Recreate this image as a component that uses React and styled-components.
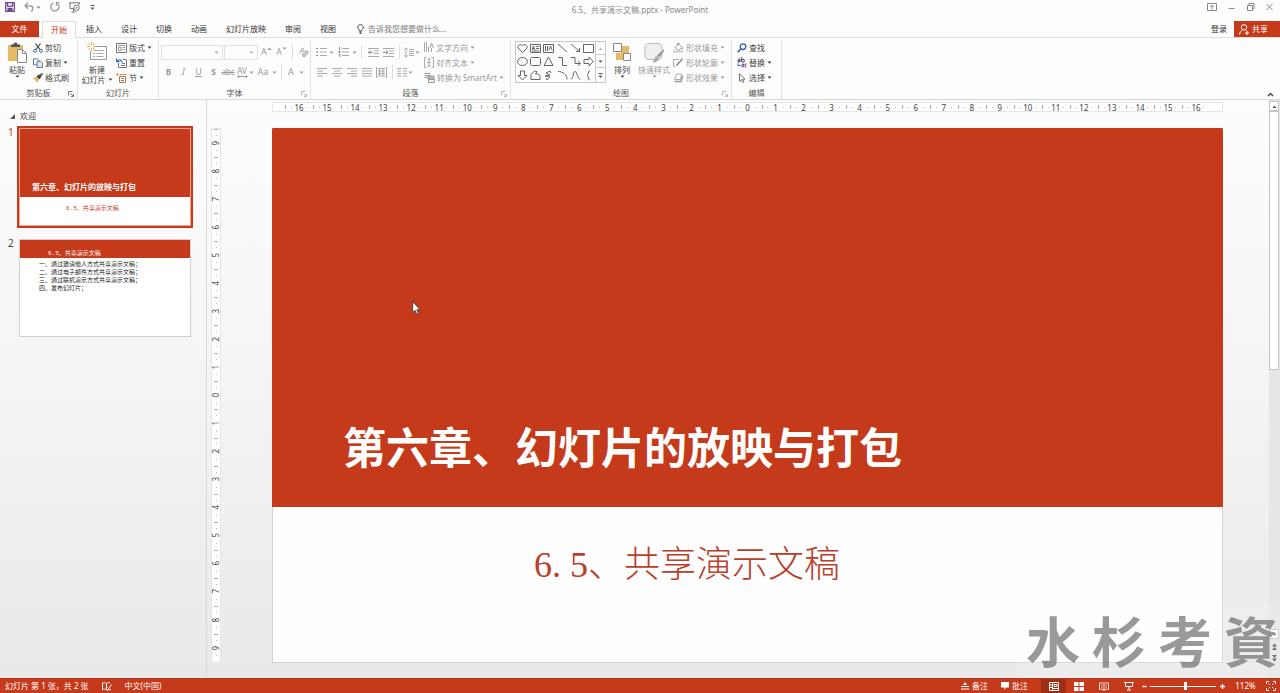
import React from "react";
import styled, { createGlobalStyle, css } from "styled-components";

const RED = "#c53a1a";
const SANS = `"Noto Sans", "Noto Sans CJK SC", sans-serif`;
const CJK = `"Noto Sans CJK SC", sans-serif`;

const GlobalStyle = createGlobalStyle`
  * { box-sizing: border-box; }
  body { margin: 0; background: #fdfdfd; color: #444; font-family: ${SANS}; font-size: 8px; line-height: 12px; }
  button, select, input { font: inherit; color: inherit; margin: 0; }
  h1, h2, p, ul, ol { margin: 0; padding: 0; font-weight: inherit; font-size: inherit; }
  svg { display: block; flex: none; }
`;

const Page = styled.div`
  position: relative;
  display: flex;
  flex-direction: column;
  min-height: 100vh;
  overflow: hidden;
`;

const PlainButton = styled.button`
  display: flex;
  align-items: center;
  gap: ${(p) => p.$gap || 0}px;
  padding: 0;
  border: 0;
  background: none;
  white-space: nowrap;
`;

/* ---------- title bar ---------- */
const TitleBar = styled.header`
  display: grid;
  grid-template-columns: 1fr auto 1fr;
  align-items: center;
  height: 20px;
  color: #8a8a8a;
`;
const QuickAccess = styled.div`
  display: flex;
  align-items: center;
  gap: 9px;
  padding: 0 0 6px 5px;
`;
const WindowTitle = styled.h1`
  font-size: 8px;
  line-height: 12px;
`;
const WindowControls = styled.div`
  display: flex;
  justify-content: flex-end;
  gap: 10px;
  padding: 0 6px 6px 0;
`;

/* ---------- tabs ---------- */
const TabBar = styled.nav`
  display: flex;
  align-items: stretch;
  height: 18px;
  border-bottom: 1px solid #dedede;
`;
const Tab = styled(PlainButton)`
  padding: 0 9px;
  margin-right: 1px;
  color: #333;
`;
const FileTab = styled(Tab)`
  width: 39px;
  justify-content: center;
  margin: 1px 3px 0 0;
  background: ${RED};
  color: #fff;
`;
const ActiveTab = styled(Tab)`
  width: 34px;
  justify-content: center;
  padding: 0;
  margin: 1px 1px -1px 0;
  border: 1px solid #dedede;
  border-bottom: 0;
  background: #fdfdfd;
  color: ${RED};
`;
const TellMe = styled(PlainButton)`
  gap: 4px;
  margin-left: 11px;
  color: #777;
`;
const SignIn = styled(Tab)`
  margin-left: auto;
  padding: 0 7px;
  margin-right: 0;
`;
const ShareButton = styled(PlainButton)`
  width: 46px;
  gap: 3px;
  padding-left: 5px;
  margin-top: 1px;
  background: ${RED};
  color: #fff;
`;

/* ---------- ribbon ---------- */
const Ribbon = styled.section`
  display: flex;
  height: 62px;
  border-bottom: 1px solid #d8d8d8;
`;
const Group = styled.div`
  position: relative;
  display: flex;
  flex-direction: column;
  flex: none;
  width: ${(p) => p.$width}px;
  margin: 2px 0 0;
  border-right: 1px solid #e2e2e2;
`;
const GroupBody = styled.div`
  display: flex;
  flex: 1;
  padding-left: ${(p) => p.$pad || 0}px;
`;
const GroupLabel = styled.div`
  text-align: center;
  line-height: 12px;
  color: #555;
`;
const Launcher = styled(PlainButton)`
  position: absolute;
  right: 3px;
  bottom: 2px;
  color: ${(p) => (p.$dim ? "#bbb" : "#777")};
`;
const BigButton = styled(PlainButton)`
  flex-direction: column;
  width: ${(p) => p.$width}px;
  height: 45px;
  padding-top: 2px;
  line-height: 10px;
  color: ${(p) => (p.$dim ? "#999" : "#444")};
  svg:first-child { margin-bottom: 2px; }
`;
const BigLabel = styled.span`
  display: flex;
  align-items: center;
  gap: 2px;
`;
const Stack = styled.div`
  display: flex;
  flex-direction: column;
  margin-left: ${(p) => p.$left || 0}px;
`;
const SmallButton = styled(PlainButton)`
  height: 15px;
  gap: 2px;
  color: ${(p) => (p.$dim ? "#999" : "#444")};
`;
const ToolRows = styled.div`
  display: flex;
  flex-direction: column;
  gap: 6px;
  padding-top: 5px;
`;
const ToolRow = styled.div`
  display: flex;
  align-items: center;
  height: 14px;
  color: #999;
`;
const Tool = styled(PlainButton)`
  justify-content: center;
  width: ${(p) => p.$width || 15}px;
  height: 14px;
  font-size: ${(p) => (p.$small ? 8 : 9)}px;
  ${(p) => p.$bold && css`font-weight: 700;`}
  ${(p) => p.$italic && css`font-style: italic;`}
  ${(p) => p.$underline && css`text-decoration: underline;`}
`;
const Raised = styled.span`
  display: flex;
  align-self: flex-start;
  padding-top: 2px;
`;
const Divider = styled.span`
  width: 1px;
  height: 14px;
  margin: 0 ${(p) => p.$gap || 3}px;
  background: #ddd;
`;
const Combo = styled.div`
  display: flex;
  align-items: center;
  width: ${(p) => p.$width}px;
  height: 15px;
  padding-right: 3px;
  margin-right: 1px;
  border: 1px solid #e0e0e0;
  color: #aaa;
`;
const ComboSelect = styled.select`
  flex: 1;
  min-width: 0;
  height: 12px;
  padding: 0;
  border: 0;
  appearance: none;
  background: none;
`;
const Gallery = styled.div`
  display: flex;
  width: 91px;
  height: 42px;
  margin-top: 1px;
  border: 1px solid #c8c8c8;
`;
const GalleryGrid = styled.div`
  display: grid;
  flex: 1;
  grid-template-columns: repeat(6, 1fr);
  place-items: center;
`;
const GalleryScroll = styled.div`
  display: grid;
  width: 10px;
  border-left: 1px solid #c8c8c8;
`;
const GalleryArrow = styled(PlainButton)`
  justify-content: center;
  color: ${(p) => (p.$dim ? "#bbb" : "#555")};
  & + & { border-top: 1px solid #c8c8c8; }
`;
const CollapseButton = styled(PlainButton)`
  align-self: flex-end;
  margin: 0 6px 2px auto;
`;

/* ---------- workspace ---------- */
const Workspace = styled.main`
  display: flex;
  flex: 1;
  background: linear-gradient(#fdfdfd, #f4f4f5 50%, #e9e9e9);
`;
const ThumbPane = styled.aside`
  flex: none;
  width: 207px;
  padding-top: 10px;
  border-right: 1px solid #d9d9d9;
`;
const SectionHeader = styled(PlainButton)`
  gap: 5px;
  height: 12px;
  padding-left: 10px;
  margin-bottom: 4px;
`;
const ThumbRow = styled.div`
  display: flex;
  margin-bottom: 9px;
  padding-left: 8px;
`;
const ThumbNumber = styled.span`
  width: 9px;
  font-size: 10px;
  color: ${(p) => (p.$active ? RED : "#444")};
`;
const Thumb = styled.div`
  display: flex;
  flex-direction: column;
  width: 176px;
  height: 102px;
  border: 2px solid ${(p) => (p.$active ? RED : "transparent")};
  background: #fff;
  background-clip: padding-box;
  outline: 1px solid ${(p) => (p.$active ? "#f0a48f" : "#cfcfcf")};
  outline-offset: -3px;
  font-family: ${CJK};
`;
const ThumbTitle = styled.h2`
  height: ${(p) => p.$height}px;
  margin: 1px 1px 0;
  padding: ${(p) => (p.$small ? 7 : 52)}px 0 0 ${(p) => (p.$small ? 28 : 12)}px;
  background: ${RED};
  color: #fff;
  font-size: ${(p) => (p.$small ? 6 : 8)}px;
  font-weight: ${(p) => (p.$small ? 400 : 700)};
  line-height: 12px;
  white-space: nowrap;
`;
const ThumbSubtitle = styled.p`
  padding: 5px 0 0 47px;
  font-size: 6px;
  line-height: 12px;
  color: ${RED};
`;
const ThumbList = styled.ul`
  list-style: none;
  padding: 2px 0 0 20px;
  font-size: 6px;
  line-height: 8px;
  color: #222;
`;
const Mono = styled.span`
  font-family: "Liberation Mono", monospace;
`;
const Editor = styled.section`
  display: grid;
  grid-template-columns: 10px minmax(0, 1fr);
  column-gap: 51px;
  row-gap: 16px;
  flex: 1;
  align-content: start;
  padding: 2px 46px 14px 4px;
`;
const HRuler = styled.div`
  grid-column: 2;
  display: flex;
  height: 10px;
  padding: 0 12px;
  border: 1px solid #e6e6e6;
  background: #fff;
`;
const HMark = styled.span`
  flex: 1 1 0;
  display: flex;
  justify-content: center;
  font-size: 8px;
  line-height: 9px;
  background:
    linear-gradient(#aaa, #aaa) 0 50% / 1px 4px no-repeat,
    linear-gradient(#bbb, #bbb) 22% 50% / 1px 1px no-repeat,
    linear-gradient(#bbb, #bbb) 78% 50% / 1px 1px no-repeat;
`;
const VRuler = styled.div`
  display: flex;
  flex-direction: column;
  border: 1px solid #e6e6e6;
  background: #fff;
`;
const VMark = styled.span`
  flex: 1 1 0;
  display: flex;
  align-items: center;
  justify-content: center;
  font-size: 8px;
  line-height: 8px;
  background:
    linear-gradient(#aaa, #aaa) 50% 0 / 4px 1px no-repeat,
    linear-gradient(#bbb, #bbb) 50% 22% / 1px 1px no-repeat,
    linear-gradient(#bbb, #bbb) 50% 78% / 1px 1px no-repeat;
`;
const Turned = styled.span`
  writing-mode: vertical-rl;
  transform: rotate(180deg);
`;
const Slide = styled.article`
  position: relative;
  display: flex;
  flex-direction: column;
  aspect-ratio: 16 / 9;
  border: 1px solid #d4d4d4;
  border-top-color: ${RED};
  background: #fefefe;
  font-family: ${CJK};
`;
const SlideTitle = styled.h2`
  display: flex;
  align-items: flex-end;
  height: 71%;
  padding: 0 0 32px 71px;
  margin: 0 -1px;
  background: ${RED};
  color: #fff;
  font-size: 43px;
  font-weight: 700;
  line-height: 60px;
  white-space: nowrap;
`;
const SlideSubtitle = styled.p`
  padding: 29px 0 0 261px;
  color: #b8402a;
  font-size: 36px;
  font-weight: 300;
  line-height: 50px;
  white-space: nowrap;
`;
const Digits = styled.span`
  font-family: "Liberation Serif", serif;
  font-weight: 400;
`;
const WideDot = styled.span`
  display: inline-block;
  width: 18px;
`;
const Pointer = styled.svg`
  position: absolute;
  left: 139px;
  top: 172px;
`;
const ScrollBar = styled.div`
  display: flex;
  flex-direction: column;
  flex: none;
  width: 11px;
  padding: 1px 1px 15px 0;
  background: #e6e6e6;
`;
const ScrollButton = styled(PlainButton)`
  justify-content: center;
  height: 10px;
  border: 1px solid ${(p) => (p.$bare ? "transparent" : "#c4c4c4")};
  background: ${(p) => (p.$bare ? "none" : "#fff")};
  margin-top: ${(p) => (p.$bare ? 2 : 0)}px;
  color: #555;
`;
const ScrollTrack = styled.div`
  flex: 1;
`;
const ScrollThumb = styled.div`
  height: 50%;
  border: 1px solid #c4c4c4;
  background: #fff;
`;

/* ---------- watermark ---------- */
const Watermark = styled.div`
  position: absolute;
  right: 0;
  bottom: 15px;
  display: flex;
  gap: 12px;
  width: 263px;
  height: 76px;
  padding-left: 9px;
  background: rgba(255, 255, 255, 0.15);
  color: rgba(110, 110, 110, 0.7);
  font-family: ${CJK};
  font-size: 54px;
  font-weight: 700;
  line-height: 76px;
  pointer-events: none;
`;

/* ---------- status bar ---------- */
const StatusBar = styled.footer`
  display: flex;
  align-items: center;
  height: 15px;
  padding: 0 4px 0 5px;
  border-top: 1px solid #ad3a20;
  background: ${RED};
  color: #fff;
`;
const StatusButton = styled(PlainButton)`
  gap: 3px;
  margin-right: 13px;
`;
const StatusRight = styled.div`
  display: flex;
  align-items: center;
  align-self: stretch;
  margin-left: auto;
`;
const ViewButton = styled(PlainButton)`
  align-self: stretch;
  justify-content: center;
  width: 25px;
  background: ${(p) => (p.$active ? "#9f2e15" : "none")};
`;
const Zoom = styled.input`
  appearance: none;
  width: 66px;
  height: 10px;
  margin: 0 3px 0 2px;
  background: linear-gradient(#fff, #fff) 0 50% / 100% 1px no-repeat;
  &::-webkit-slider-thumb {
    appearance: none;
    width: 3px;
    height: 8px;
    background: #fff;
  }
`;
const ZoomValue = styled(PlainButton)`
  justify-content: center;
  width: 33px;
  margin: 0 4px 0 3px;
`;

/* ---------- icons ---------- */
const Icon = ({ w = 10, h = w, children, sw = 1, ...rest }) => (
  <svg width={w} height={h} viewBox={`0 0 ${w} ${h}`} fill="none" stroke="currentColor" strokeWidth={sw} aria-hidden="true" {...rest}>
    {children}
  </svg>
);
const Caret = () => (
  <Icon w={5} h={3}><path d="M.5.5h4L2.500 2.700z" fill="currentColor" stroke="none" /></Icon>
);
const CaretUp = () => (
  <Icon w={5} h={3}><path d="M.5 3h4L2.500.5z" fill="currentColor" stroke="none" /></Icon>
);
const LauncherIcon = () => (
  <Icon w={6}><path d="M.5 4.500v-4h4M2.500 2.500l2.500 2.500M5.500 3v2.500H3" /></Icon>
);
const SaveIcon = () => (
  <Icon w={10} stroke="#6f4a92" sw={1.3}><path d="M.7.7h8.600v8.600H.7z" /><path d="M2.500.7v3.500h5V.7" /><path d="M3 9V6.300h4v2.700" fill="#6f4a92" /></Icon>
);
const UndoIcon = () => (
  <Icon w={10} stroke="#999" sw={1.3}><path d="M4 .8L1 3.800l3 3M1 3.800h5.500c3 0 3 4.500.5 5.500" /></Icon>
);
const RedoIcon = () => (
  <Icon w={10} stroke="#999" sw={1.3}><path d="M3.500 1a4.100 4.100 0 1 0 4.500 1.200M9.300.7H6.500v3" /></Icon>
);
const ShowIcon = () => (
  <Icon w={12} h={11} stroke="#777"><path d="M0 .8h11M1 .8v5.700h3.500M10 .8v2.500M4.500 6.500v3M2.500 10h4" /><circle cx="7.500" cy="5.800" r="2.800" /><path d="M6.800 4.500v2.600l2-1.300z" fill="#777" stroke="none" /></Icon>
);
const PasteIcon = () => (
  <Icon w={20} h={21}>
    <path d="M1 3h15v16H1z" fill="#e6b964" stroke="none" />
    <path d="M4 5V2.500h2.500a2 2 0 0 1 4 0H13V5z" fill="#555" stroke="none" />
    <path d="M10.500 7.500h5l4 4v9h-9z" fill="#fff" stroke="#888" /><path d="M15.500 7.500v4h4" stroke="#888" />
  </Icon>
);
const CutIcon = () => (
  <Icon w={10} stroke="#444"><path d="M2.500.5l4.500 6M7.500.5L3 6.500" strokeWidth="1.200" /><circle cx="2" cy="7.800" r="1.500" stroke="#2f6fb5" /><circle cx="8" cy="7.800" r="1.500" stroke="#2f6fb5" /></Icon>
);
const CopyIcon = () => (
  <Icon w={10} stroke="#64789b"><path d="M.5.800h4l1.500 1.500v4.500H.5z" fill="#fff" /><path d="M4 3.300h3.500L9.500 5v4.500H4z" fill="#dfe7f3" /></Icon>
);
const BrushIcon = () => (
  <Icon w={10}><path d="M0 5l4-1.500 2.500 2.500L4 9.500z" fill="#e6b964" stroke="none" /><path d="M3.500 3.500L6 1.300l2.500 2.500L6.500 6.300z" fill="#444" stroke="none" /><path d="M7 2.800L9.500.5" stroke="#444" strokeWidth="1.600" /></Icon>
);
const NewSlideIcon = () => (
  <Icon w={20} h={21}>
    <path d="M3.500 4.500h16v13h-16z" fill="#fff" stroke="#999" />
    <path d="M6 8.500h11M6 11.500h2M9.500 11.500h7M6 14.500h2M9.500 14.500h7" stroke="#aaa" />
    <circle cx="4.500" cy="4.500" r="4.500" fill="#fdfdfd" stroke="none" />
    <path d="M4.500 0v9M0 4.500h9M1.300 1.300l6.400 6.400M7.700 1.300L1.300 7.700" stroke="#e0ac52" /><circle cx="4.500" cy="4.500" r="1.700" fill="#fff" stroke="none" />
  </Icon>
);
const LayoutIcon = () => (
  <Icon w={11} h={10} stroke="#777"><path d="M.5.5h10v9H.5z" /><path d="M2 2.500h7M2.500 4.500H5v3H2.500zM6.500 4.500H9M6.500 6.500H9" stroke="#999" /></Icon>
);
const ResetIcon = () => (
  <Icon w={11} h={10} stroke="#777"><path d="M2.500 5v4.500h8v-8H7M5 7.500h4M6 5.500h3" /><path d="M6 4.500C6 1.300 2.500.800 1 3.500M.6.500v3.200h3" stroke="#2f6fb5" strokeWidth="1.200" /></Icon>
);
const SectionIcon = () => (
  <Icon w={11} h={10} stroke="#d99a52"><path d="M3.500 1.500h7M0 1.500h2.500M1.500 0v3" /><path d="M3.500 3.500h6v6h-6zM5 5.500h3M5 7.500h3" stroke="#a57958" /></Icon>
);
const BulbIcon = () => (
  <Icon w={7} h={10} stroke="#444"><path d="M2.300 7V5.800C-.8 3.500 1 .6 3.500.600S7.800 3.500 4.700 5.800V7zM2.300 8.200h2.400M2.700 9.500h1.600" /></Icon>
);
const PersonIcon = () => (
  <Icon w={10} h={11} stroke="#fff"><circle cx="5" cy="3.300" r="2.700" /><path d="M.7 10.500C.7 8 2 6.500 3.500 6M6.500 6l1 .7M8 7v4M6 9h4" /></Icon>
);
const BulletsIcon = ({ numbered }) => (
  <Icon w={11} h={10} stroke="#aaa"><path d="M4 1.500h7M4 5h7M4 8.500h7" /><path d={numbered ? "M1.500 0v3M.5 4.500h1.500v1H.5M.5 7.500h1.500V10" : "M0 1.500h2M0 5h2M0 8.500h2"} stroke="#888" /></Icon>
);
const IndentIcon = ({ right }) => (
  <Icon w={11} h={9} stroke="#aaa"><path d="M0 .5h11M6 3h5M6 5.500h5M0 8.500h11" /><path d={right ? "M0 4.300h4.500M3 2.500l2 1.800-2 1.800" : "M5 4.300H.7M2.500 2.500l-2 1.800 2 1.800"} stroke="#888" /></Icon>
);
const SpacingIcon = () => (
  <Icon w={10} h={11} stroke="#aaa"><path d="M2 1v9M.3 2.700L2 .800l1.700 1.900M.3 8.300L2 10.200l1.700-1.900M5 2.500h5M5 4.500h5M5 6.500h5M5 8.500h5" /></Icon>
);
const aligns = {
  left: "M0 .5h10M0 3h6M0 5.500h10M0 8h6",
  center: "M0 .5h10M2 3h6M0 5.500h10M2 8h6",
  right: "M0 .5h10M4 3h6M0 5.500h10M4 8h6",
  justify: "M0 .5h10M0 3h10M0 5.500h10M0 8h10",
  columns: "M0 .5h4M0 3h4M0 5.500h4M0 8h4M6 .5h4M6 3h4M6 5.500h4M6 8h4",
};
const AlignIcon = ({ kind }) => <Icon w={10} h={9} stroke="#aaa"><path d={aligns[kind]} /></Icon>;
const DistributeIcon = () => (
  <Icon w={11} h={11} stroke="#aaa"><path d="M.5 0v11M10.500 0v11M2 1.500h7M2 4h7M2 6.500h7M2 9h7M3.500 1v8M7 1v8" /></Icon>
);
const SpacingLettersIcon = () => (
  <Icon w={11} h={3} stroke="#999"><path d="M.7 1.500h9.600M2.300 0L.7 1.500l1.600 1.500M8.700 0l1.600 1.500L8.700 3" /></Icon>
);
const LetterStack = styled.span`
  display: flex;
  flex-direction: column;
  align-items: center;
  line-height: 8px;
`;
const TextDirIcon = () => (
  <Icon w={10} h={11} stroke="#aaa"><path d="M.5 0v10M2.500 0v10M4.500 5v5M5.500 6L7.500.800 9.500 6M6 4h3M7.500 6v4" /></Icon>
);
const AlignTextIcon = () => (
  <Icon w={10} h={11} stroke="#aaa"><path d="M2.500.5h-2v10h2M7.500.5h2v10h-2M5 1.500v8M3.500 3L5 1.300 6.500 3M3.500 8L5 9.700 6.500 8M3 5.500h4" /></Icon>
);
const SmartArtIcon = () => (
  <Icon w={11} h={11} stroke="#999"><path d="M.5 1.500h6M.5 3.500h6M.5 5.500h3" /><path d="M4 4h6v3H4z" fill="#bbb" /><path d="M4.500 7.500h6v3h-6z" fill="#eee" /></Icon>
);
const EraserIcon = () => (
  <Icon w={10} h={10} stroke="#aaa"><path d="M.5 6.500L3.500.8 5 4M2 4.500h2.500" /><path d="M3 7.500l4.500-4L9.500 5 6 9.500H4z" fill="#ccc" /></Icon>
);
const ArrangeIcon = () => (
  <Icon w={20} h={21}>
    <path d="M9 4h8v8H9zM4 11h8v7H4z" fill="#e6b964" stroke="none" />
    <path d="M1.500 1.500h8v8h-8zM11.500 11.500h7v7h-7z" fill="#fff" stroke="#888" />
  </Icon>
);
const StylesIcon = () => (
  <Icon w={20} h={21}>
    <path d="M5 1.500h9c2.500 0 4 1.500 4 4v8c0 2.500-1.500 4-4 4H5c-2.500 0-4-1.500-4-4v-8c0-2.500 1.500-4 4-4z" fill="#efeef2" stroke="#bbb" />
    <path d="M19.800 7L13 13.500l2.200 2.200 4.600-6.200z" fill="#999" stroke="none" /><path d="M12.500 14l2.500 2.500c-1 3-3.500 4-7 4 2-1 2.500-5.500 4.500-6.500z" fill="#aaa" stroke="none" />
  </Icon>
);
const FillIcon = () => (
  <Icon w={11} h={10} stroke="#999"><path d="M2 4.500L5.500 1 9 4.500 5.500 7.500zM4.500 2V.500h2" /><path d="M9.500 4.500v2" /><path d="M0 8.500h10" stroke="#ccc" strokeWidth="2" /></Icon>
);
const OutlineIcon = () => (
  <Icon w={11} h={10} stroke="#aaa"><path d="M6 1.500H.5v7h2" /><path d="M3.500 7.500L9.500.800" stroke="#888" strokeWidth="1.500" /></Icon>
);
const EffectsIcon = () => (
  <Icon w={11} h={10} stroke="#aaa"><path d="M3.500 1h5l-.8 5.500h-6z" fill="#fff" /><path d="M1.500 8.500h6.500l1.700-6" stroke="#999" strokeWidth="1.500" /></Icon>
);
const FindIcon = () => (
  <Icon w={10} stroke="#2f5fa5" sw={1.3}><circle cx="6" cy="3.700" r="2.800" /><path d="M4 5.700L.7 9.200" strokeWidth="1.600" /></Icon>
);
const ReplaceIcon = () => (
  <Icon w={10} h={11} stroke="#4a4a6a"><path d="M1 2h2v3H1V3.500h2M4.700 0v5h2.500V2.500H4.700" /><path d="M6.500 7H5v2.800h1.500V7M9.700 7H8v2.800h1.700" stroke="#7a4a9a" /><path d="M1 6.500v2h2.500" stroke="#2f5fa5" /></Icon>
);
const SelectIcon = () => (
  <Icon w={10} h={10} stroke="#777"><path d="M2.500.8v7.500l2-1.800 1.200 3 1.200-.6-1.200-2.700h2.400z" fill="#fff" /></Icon>
);
const shapePaths = [
  "M5.500 9.500L1 5C0 2.500 3.500 0 5.500 2.800 7.500 0 11 2.500 10 5z",
  "M.5 1.500h10v8H.5zM2 7l1.500-4L5 7M2.500 5.500h2M6 3.500h3M6 5.500h3M2 8h7",
  "M.5 1.500h10v8H.5zM2.500 3v5M4.500 3v5M6 7l1.500-4L9 7",
  "M1 1l9 8",
  "M1 1l8.500 7.500M9.500 5v3.500H6",
  "M.5 1.500h10v8H.5z",
  "M5.500 1.500c6.500 0 6.500 8 0 8s-6.500-8 0-8z",
  "M1.500 1.500h8l1 1v6l-1 1h-8l-1-1v-6z",
  "M5.500 1L10 9.500H1z",
  "M1 1.500h4.500v8H10",
  "M1 1.500h4v6h5M8 5l2.300 2.500L8 10",
  "M1 3.500h5V1l4.500 4.500L6 10V7.500H1z",
  "M3.500 1h4v4.500H10L5.500 10 1 5.500h2.500z",
  "M1 9.500v-5L4.500 1l2.500.5L5.500 4c2.500-.8 4.500.5 4.500 2.500v3z",
  "M7 1L3 3l4 2-5 1 5 1-3 3M7 1l1 2M4 10l-1-2",
  "M1 1.500c5 0 9 3 9 8",
  "M.5 9C4 9 2.500 1.500 5 1.500S7 9.500 10.500 9",
  "M7 1C4.500 1 6 5 4 5.500 6 6 4.500 10 7 10",
];

const ruler = (n) => Array.from({ length: n * 2 + 1 }, (_, i) => Math.abs(i - n));

const Small = ({ icon, label, caret, dim }) => (
  <SmallButton $dim={dim}>{icon}<span>{label}</span>{caret && <Caret />}</SmallButton>
);

export default function App() {
  return (
    <Page>
      <GlobalStyle />
      <TitleBar>
        <QuickAccess>
          <PlainButton aria-label="保存"><SaveIcon /></PlainButton>
          <PlainButton $gap={2} aria-label="撤消"><UndoIcon /><Caret /></PlainButton>
          <PlainButton aria-label="重复"><RedoIcon /></PlainButton>
          <PlainButton aria-label="从头开始"><ShowIcon /></PlainButton>
          <PlainButton aria-label="自定义快速访问工具栏"><Icon w={5} h={5}><path d="M.5.5h4" stroke="#555" /><path d="M.5 2.500h4L2.500 5z" fill="#555" stroke="none" /></Icon></PlainButton>
        </QuickAccess>
        <WindowTitle>6.5、共享演示文稿.pptx - PowerPoint</WindowTitle>
        <WindowControls>
          <PlainButton aria-label="功能区显示选项"><Icon w={10} h={8}><path d="M.5.5h9v7h-9zM5 6.500v-4M3.300 4L5 2.300 6.700 4" /></Icon></PlainButton>
          <PlainButton aria-label="最小化"><Icon w={9} h={8}><path d="M1.500 5.500h6" /></Icon></PlainButton>
          <PlainButton aria-label="还原"><Icon w={9} h={8}><path d="M1.500 2.500h5v5h-5zM3 2.500v-2h5v5H6.500" /></Icon></PlainButton>
          <PlainButton aria-label="关闭"><Icon w={9} h={8}><path d="M1.500 1l6 6M7.500 1l-6 6" /></Icon></PlainButton>
        </WindowControls>
      </TitleBar>

      <TabBar>
        <FileTab>文件</FileTab>
        <ActiveTab>开始</ActiveTab>
        {["插入", "设计", "切换", "动画", "幻灯片放映", "审阅", "视图"].map((t) => <Tab key={t}>{t}</Tab>)}
        <TellMe><BulbIcon />告诉我您想要做什么...</TellMe>
        <SignIn>登录</SignIn>
        <ShareButton><PersonIcon />共享</ShareButton>
      </TabBar>

      <Ribbon>
        <Group $width={78}>
          <GroupBody $pad={4}>
            <BigButton $width={26}><PasteIcon /><BigLabel>粘贴</BigLabel><Caret /></BigButton>
            <Stack $left={3}>
              <Small icon={<CutIcon />} label="剪切" />
              <Small icon={<CopyIcon />} label="复制" caret />
              <Small icon={<BrushIcon />} label="格式刷" />
            </Stack>
          </GroupBody>
          <GroupLabel>剪贴板</GroupLabel>
          <Launcher aria-label="剪贴板选项"><LauncherIcon /></Launcher>
        </Group>

        <Group $width={81}>
          <GroupBody $pad={3}>
            <BigButton $width={32}><NewSlideIcon /><BigLabel>新建</BigLabel><BigLabel>幻灯片<Caret /></BigLabel></BigButton>
            <Stack $left={3}>
              <Small icon={<LayoutIcon />} label="版式" caret />
              <Small icon={<ResetIcon />} label="重置" />
              <Small icon={<SectionIcon />} label="节" caret />
            </Stack>
          </GroupBody>
          <GroupLabel>幻灯片</GroupLabel>
        </Group>

        <Group $width={152}>
          <GroupBody $pad={2}>
            <ToolRows>
              <ToolRow>
                <Combo $width={62}><ComboSelect aria-label="字体"><option></option></ComboSelect><Caret /></Combo>
                <Combo $width={34}><ComboSelect aria-label="字号"><option></option></ComboSelect><Caret /></Combo>
                <Tool aria-label="增大字号">A<Raised><CaretUp /></Raised></Tool>
                <Tool aria-label="减小字号" $small>A<Raised><Caret /></Raised></Tool>
                <Divider />
                <Tool aria-label="清除格式"><EraserIcon /></Tool>
              </ToolRow>
              <ToolRow>
                <Tool $bold $small>B</Tool>
                <Tool $italic>I</Tool>
                <Tool $underline>U</Tool>
                <Tool $bold>S</Tool>
                <Tool $small $width={14} aria-label="删除线"><s>abc</s></Tool>
                <Tool $small $width={14} aria-label="字符间距"><LetterStack>AV<SpacingLettersIcon /></LetterStack></Tool>
                <Caret />
                <Tool $width={18}>Aa</Tool>
                <Caret />
                <Divider $gap={4} />
                <Tool $width={10}>A</Tool>
                <Tool $width={10} aria-label="字体颜色"><Caret /></Tool>
              </ToolRow>
            </ToolRows>
          </GroupBody>
          <GroupLabel>字体</GroupLabel>
          <Launcher $dim aria-label="字体选项"><LauncherIcon /></Launcher>
        </Group>

        <Group $width={200}>
          <GroupBody $pad={3}>
            <ToolRows>
              <ToolRow>
                <Tool aria-label="项目符号"><BulletsIcon /></Tool><Caret />
                <Tool $width={18} aria-label="编号"><BulletsIcon numbered /></Tool><Caret />
                <Divider $gap={4} />
                <Tool aria-label="减少缩进"><IndentIcon /></Tool>
                <Tool aria-label="增加缩进"><IndentIcon right /></Tool>
                <Divider />
                <Tool $width={12} aria-label="行距"><SpacingIcon /></Tool><Caret />
              </ToolRow>
              <ToolRow>
                <Tool aria-label="左对齐"><AlignIcon kind="left" /></Tool>
                <Tool aria-label="居中"><AlignIcon kind="center" /></Tool>
                <Tool aria-label="右对齐"><AlignIcon kind="right" /></Tool>
                <Tool aria-label="两端对齐"><AlignIcon kind="justify" /></Tool>
                <Tool aria-label="分散对齐"><DistributeIcon /></Tool>
                <Divider />
                <Tool $width={12} aria-label="分栏"><AlignIcon kind="columns" /></Tool><Caret />
              </ToolRow>
            </ToolRows>
            <Stack $left={4}>
              <Small dim icon={<TextDirIcon />} label="文字方向" caret />
              <Small dim icon={<AlignTextIcon />} label="对齐文本" caret />
              <Small dim icon={<SmartArtIcon />} label="转换为 SmartArt" caret />
            </Stack>
          </GroupBody>
          <GroupLabel>段落</GroupLabel>
          <Launcher $dim aria-label="段落选项"><LauncherIcon /></Launcher>
        </Group>

        <Group $width={221}>
          <GroupBody $pad={4}>
            <Gallery>
              <GalleryGrid>
                {shapePaths.map((d) => <Icon key={d} w={11} stroke="#666"><path d={d} /></Icon>)}
              </GalleryGrid>
              <GalleryScroll>
                <GalleryArrow $dim aria-label="上一行"><CaretUp /></GalleryArrow>
                <GalleryArrow aria-label="下一行"><Caret /></GalleryArrow>
                <GalleryArrow aria-label="其他"><Icon w={5} h={5}><path d="M.5.5h4" /><path d="M.5 2.500h4L2.500 5z" fill="#555" stroke="none" /></Icon></GalleryArrow>
              </GalleryScroll>
            </Gallery>
            <BigButton $width={32}><ArrangeIcon /><BigLabel>排列</BigLabel><Caret /></BigButton>
            <BigButton $width={32} $dim><StylesIcon /><BigLabel>快速样式</BigLabel><Caret /></BigButton>
            <Stack $left={3}>
              <Small dim icon={<FillIcon />} label="形状填充" caret />
              <Small dim icon={<OutlineIcon />} label="形状轮廓" caret />
              <Small dim icon={<EffectsIcon />} label="形状效果" caret />
            </Stack>
          </GroupBody>
          <GroupLabel>绘图</GroupLabel>
          <Launcher $dim aria-label="形状格式"><LauncherIcon /></Launcher>
        </Group>

        <Group $width={50}>
          <GroupBody $pad={5}>
            <Stack>
              <Small icon={<FindIcon />} label="查找" />
              <Small icon={<ReplaceIcon />} label="替换" caret />
              <Small icon={<SelectIcon />} label="选择" caret />
            </Stack>
          </GroupBody>
          <GroupLabel>编辑</GroupLabel>
        </Group>
        <CollapseButton aria-label="折叠功能区"><Icon w={7} h={5} sw={1.4}><path d="M1 4l2.500-2.500L6 4" /></Icon></CollapseButton>
      </Ribbon>

      <Workspace>
        <ThumbPane>
          <SectionHeader><Icon w={5} h={5}><path d="M5 0v5H0z" fill="#555" stroke="none" /></Icon>欢迎</SectionHeader>
          <ThumbRow>
            <ThumbNumber $active>1</ThumbNumber>
            <Thumb $active>
              <ThumbTitle $height={68}>第六章、幻灯片的放映与打包</ThumbTitle>
              <ThumbSubtitle><Mono>6.5</Mono>、共享演示文稿</ThumbSubtitle>
            </Thumb>
          </ThumbRow>
          <ThumbRow>
            <ThumbNumber>2</ThumbNumber>
            <Thumb>
              <ThumbTitle $height={18} $small><Mono>6.5</Mono>、共享演示文稿</ThumbTitle>
              <ThumbList>
                <li>一、通过邀请他人方式共享演示文稿；</li>
                <li>二、通过电子邮件方式共享演示文稿；</li>
                <li>三、通过联机演示方式共享演示文稿；</li>
                <li>四、发布幻灯片；</li>
              </ThumbList>
            </Thumb>
          </ThumbRow>
        </ThumbPane>

        <Editor>
          <HRuler>{ruler(16).map((n, i) => <HMark key={i}>{n}</HMark>)}</HRuler>
          <VRuler>{ruler(9).map((n, i) => <VMark key={i}><Turned>{n}</Turned></VMark>)}</VRuler>
          <Slide>
            <SlideTitle>第六章、幻灯片的放映与打包</SlideTitle>
            <SlideSubtitle><Digits>6<WideDot>.</WideDot>5</Digits>、共享演示文稿</SlideSubtitle>
            <Pointer width="9" height="14" viewBox="0 0 9 14" aria-hidden="true">
              <path d="M.7.8v10.700l2.400-2.200 1.700 4 1.700-.8-1.700-3.800h3.400z" fill="#fff" stroke="#333" strokeWidth=".8" />
            </Pointer>
          </Slide>
        </Editor>

        <ScrollBar>
          <ScrollButton aria-label="向上滚动"><CaretUp /></ScrollButton>
          <ScrollTrack><ScrollThumb /></ScrollTrack>
          <ScrollButton aria-label="向下滚动"><Caret /></ScrollButton>
          <ScrollButton $bare aria-label="上一张幻灯片"><Icon w={5} h={7}><path d="M0 3.500L2.500.5 5 3.500zM0 7l2.500-3L5 7z" fill="currentColor" stroke="none" /></Icon></ScrollButton>
          <ScrollButton $bare aria-label="下一张幻灯片"><Icon w={5} h={7}><path d="M0 0l2.500 3L5 0zM0 3.500l2.500 3 2.500-3z" fill="currentColor" stroke="none" /></Icon></ScrollButton>
        </ScrollBar>
      </Workspace>

      <StatusBar>
        <StatusButton>幻灯片 第 1 张，共 2 张</StatusButton>
        <StatusButton aria-label="拼写检查"><Icon w={10} h={9}><path d="M4.500 1.500c-1-1-3-1-4-.5v6.500c1-.5 3-.5 4 .5zM4.500 1.500c1-1 2.500-1 3.500-.7M5 8.500c1-.8 2.500-1 4-.8M5.500 5.500l1.200 1.200L9.500 2.500" /></Icon></StatusButton>
        <StatusButton>中文(中国)</StatusButton>
        <StatusRight>
          <StatusButton><Icon w={8} h={8}><path d="M4 0L2 3h4z" fill="#fff" stroke="none" /><path d="M0 4.500h8M0 7h8" /></Icon>备注</StatusButton>
          <StatusButton><Icon w={8} h={8}><path d="M0 0h8v5.500H5L3.500 8V5.500H0z" fill="#fff" stroke="none" /></Icon>批注</StatusButton>
          <ViewButton $active aria-label="普通视图"><Icon w={10} h={9}><path d="M.5.5h9v8h-9zM3.500.5v8M5 2.500h3v2H5zM3.500 6.500h6M.5 3h3M.5 5.500h3" /></Icon></ViewButton>
          <ViewButton aria-label="幻灯片浏览"><Icon w={10} h={9}><path d="M0 0h4.500v4H0zM5.500 0H10v4H5.500zM0 5h4.500v4H0zM5.500 5H10v4H5.500z" fill="#fff" stroke="none" /></Icon></ViewButton>
          <ViewButton aria-label="阅读视图"><Icon w={10} h={9}><path d="M5 1.500C4 .5 2 .500.5 1v6.500c1.500-.5 3.500-.5 4.500.8 1-1.300 3-1.300 4.500-.8V1C8 .5 6 .500 5 1.500zM5 1.500v7M2 3h1.500M2 5h1.500M6.500 3H8M6.500 5H8" opacity=".85" /></Icon></ViewButton>
          <ViewButton aria-label="幻灯片放映"><Icon w={10} h={9}><path d="M0 .5h10M1.500.5v4h7v-4M5 4.500v3M3 8h4" /></Icon></ViewButton>
          <PlainButton aria-label="缩小"><Icon w={7} h={7}><path d="M1.500 3.500h4" strokeWidth="1.500" /></Icon></PlainButton>
          <Zoom type="range" min="10" max="212" defaultValue="118" aria-label="缩放" />
          <PlainButton aria-label="放大"><Icon w={7} h={7} sw={1.4}><path d="M1 3.500h5M3.500 1v5" /></Icon></PlainButton>
          <ZoomValue>112%</ZoomValue>
          <PlainButton aria-label="适应窗口"><Icon w={10} h={10}><path d="M.5 3V.5H3M7 .5h2.500V3M9.500 7v2.500H7M3 9.500H.5V7M2.500 2.500l1.500 1.500M7.500 2.500L6 4M2.500 7.500L4 6M7.500 7.500L6 6" /></Icon></PlainButton>
        </StatusRight>
      </StatusBar>

      <Watermark>
        <span>水</span><span>杉</span><span>考</span><span>資</span>
      </Watermark>
    </Page>
  );
}
